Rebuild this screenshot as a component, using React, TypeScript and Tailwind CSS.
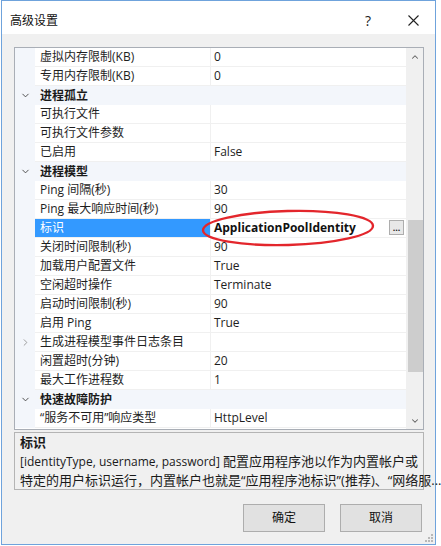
import { ChevronDown, ChevronRight, ChevronUp } from 'lucide-react';

type Row = {
  name: string;
  value?: string;
  category?: boolean;
  selected?: boolean;
  collapsed?: boolean;
};

const rows: Row[] = [
  { name: '虚拟内存限制(KB)', value: '0' },
  { name: '专用内存限制(KB)', value: '0' },
  { name: '进程孤立', category: true },
  { name: '可执行文件', value: '' },
  { name: '可执行文件参数', value: '' },
  { name: '已启用', value: 'False' },
  { name: '进程模型', category: true },
  { name: 'Ping 间隔(秒)', value: '30' },
  { name: 'Ping 最大响应时间(秒)', value: '90' },
  { name: '标识', value: 'ApplicationPoolIdentity', selected: true },
  { name: '关闭时间限制(秒)', value: '90' },
  { name: '加载用户配置文件', value: 'True' },
  { name: '空闲超时操作', value: 'Terminate' },
  { name: '启动时间限制(秒)', value: '90' },
  { name: '启用 Ping', value: 'True' },
  { name: '生成进程模型事件日志条目', value: '', collapsed: true },
  { name: '闲置超时(分钟)', value: '20' },
  { name: '最大工作进程数', value: '1' },
  { name: '快速故障防护', category: true },
  { name: '“服务不可用”响应类型', value: 'HttpLevel' },
];

const font = "font-['Segoe_UI','Open_Sans','Noto_Sans_CJK_SC',sans-serif]";

function GridRow({ row }: { row: Row }) {
  if (row.category) {
    return (
      <div className="flex h-[19px] items-center bg-[#f3f6fb]">
        <div className="flex w-[20px] justify-center">
          <ChevronDown className="h-[11px] w-[11px] text-[#444]" strokeWidth={2} />
        </div>
        <span className="pl-[5px] text-[12px] font-bold text-[#1a1a1a]">{row.name}</span>
      </div>
    );
  }
  return (
    <div className="flex h-[19px]">
      <div className="flex w-[20px] items-center justify-center bg-[#f3f6fb]">
        {row.collapsed && <ChevronRight className="h-[11px] w-[11px] text-[#888]" strokeWidth={1.75} />}
      </div>
      <div
        className={`flex w-[175px] items-center border-b border-[#f0f0f0] pl-[5px] text-[12px] ${
          row.selected ? 'bg-[#3399ff] text-white' : 'bg-white text-[#1e1e1e]'
        }`}
      >
        {row.name}
      </div>
      <div className="flex flex-1 items-center border-b border-l border-[#f0f0f0] bg-white pl-[3px] text-[12px] text-[#1e1e1e]">
        <span className={row.selected ? 'font-bold text-[#111]' : ''}>{row.value}</span>
      </div>
    </div>
  );
}

export default function App() {
  return (
    <div className={`h-[546px] w-[441px] bg-white ${font}`}>
      <div className="ml-[1px] flex h-[545px] w-[435px] flex-col border border-[#6fa3dc]">
        {/* Title bar */}
        <div className="flex h-[33px] items-center bg-white pt-[6px] pl-[8px] text-[12px] text-[#111]">
          <span className="flex-1">高级设置</span>
          <span className="mr-[37px] text-[14px] text-[#222]">?</span>
          <svg className="mr-[16px]" width="11" height="11" viewBox="0 0 11 11">
            <path d="M0.5 0.5 L10.5 10.5 M10.5 0.5 L0.5 10.5" stroke="#222" strokeWidth="1.1" />
          </svg>
        </div>

        {/* Body */}
        <div className="relative flex flex-1 flex-col bg-[#f0f0f0] pt-[13px] pr-[11px] pl-[12px]">
          {/* Property grid */}
          <div className="relative flex h-[383px] border border-[#a9aeb6] bg-white">
            <div className="flex flex-1 flex-col overflow-hidden">
              {rows.map((r) => (
                <GridRow key={r.name} row={r} />
              ))}
            </div>
            {/* Scrollbar */}
            <div className="flex w-[17px] flex-col border-l border-[#f0f0f0] bg-[#f0f0f0]">
              <div className="flex h-[17px] items-center justify-center">
                <ChevronUp className="h-[10px] w-[10px] text-[#606060]" strokeWidth={2.5} />
              </div>
              <div className="mt-[155px] ml-[1px] h-[152px] w-[15px] bg-[#cdcdcd]" />
              <div className="flex-1" />
              <div className="flex h-[17px] items-center justify-center">
                <ChevronDown className="h-[10px] w-[10px] text-[#606060]" strokeWidth={2.5} />
              </div>
            </div>

            {/* "..." button */}
            <div className="absolute top-[172px] left-[374px] flex h-[15px] w-[15px] items-end justify-center border border-[#adadad] bg-[#e8e8e8] pb-[2px] text-[9px] leading-none font-bold text-[#222]">
              ...
            </div>

            {/* Red hand-drawn ellipse */}
            <svg className="pointer-events-none absolute top-[152px] left-[185px]" width="190" height="56" viewBox="0 0 190 56">
              <ellipse
                cx="88"
                cy="28"
                rx="85"
                ry="17"
                fill="none"
                stroke="#e3262c"
                strokeWidth="2.4"
                transform="rotate(-1.5 88 28)"
              />
            </svg>
          </div>

          {/* Description */}
          <div className="mt-[2px] flex h-[58px] flex-col border border-[#b4b4b4] bg-[#f0f0f0] px-[5px] text-[13px] leading-[19px] text-[#1a1a1a]">
            <span className="font-bold">标识</span>
            <span className="whitespace-nowrap">
              <span className="text-[12px]">[identityType, username, password] </span>配置应用程序池以作为内置帐户或
            </span>
            <span className="whitespace-nowrap">特定的用户标识运行，内置帐户也就是“应用程序池标识”(推荐)、“网络服...</span>
          </div>

          {/* Buttons */}
          <div className="mt-[14px] flex justify-end gap-[15px] pr-[2px]">
            <button className="h-[28px] w-[82px] border border-[#adadad] bg-[#e1e1e1] text-[12px] text-[#111]">确定</button>
            <button className="h-[28px] w-[82px] border border-[#adadad] bg-[#e1e1e1] text-[12px] text-[#111]">取消</button>
          </div>

          {/* Resize grip */}
          <svg className="absolute right-[1px] bottom-[1px]" width="10" height="10" viewBox="0 0 10 10">
            <rect x="7" y="1" width="2" height="2" fill="#b8b8b8" />
            <rect x="4" y="4" width="2" height="2" fill="#b8b8b8" />
            <rect x="7" y="4" width="2" height="2" fill="#b8b8b8" />
            <rect x="1" y="7" width="2" height="2" fill="#b8b8b8" />
            <rect x="4" y="7" width="2" height="2" fill="#b8b8b8" />
            <rect x="7" y="7" width="2" height="2" fill="#b8b8b8" />
          </svg>
        </div>
      </div>
    </div>
  );
}
